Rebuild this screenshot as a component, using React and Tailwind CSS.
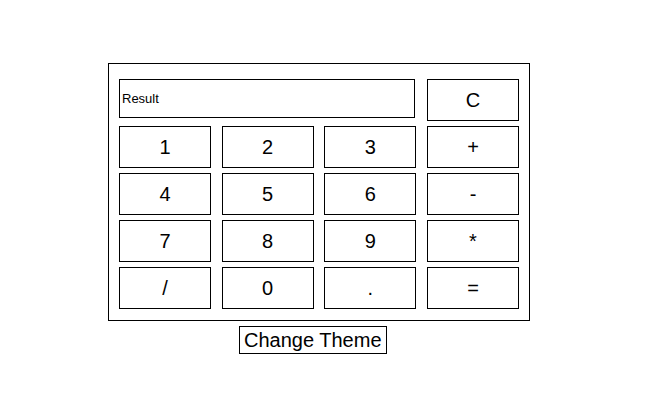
const KEYS = ['1', '2', '3', '+', '4', '5', '6', '-', '7', '8', '9', '*', '/', '0', '.', '=']

function Key({ label }) {
  return (
    <button className="h-[42px] border border-black bg-white text-[20px] text-black leading-none">
      {label}
    </button>
  )
}

export default function App() {
  return (
    <div className="min-h-[400px] bg-white pt-[63px] pl-[108px] font-['Liberation_Sans',Arial,sans-serif]">
      <div className="w-[422px] border border-black pt-[15px] px-[10px] pb-[11px]">
        <div className="grid grid-cols-4 gap-x-[10.67px] gap-y-[5px] items-start">
          <input
            readOnly
            placeholder="Result"
            className="col-span-3 h-[39px] w-[296px] border border-black px-[2px] text-[13px] text-black outline-none placeholder:text-black"
          />
          <Key label="C" />
          {KEYS.map(k => <Key key={k} label={k} />)}
        </div>
      </div>
      <button className="mt-[5px] ml-[131px] h-[28px] border border-black bg-white px-[4px] pb-[1px] text-[20px] text-black leading-none">
        Change Theme
      </button>
    </div>
  )
}
